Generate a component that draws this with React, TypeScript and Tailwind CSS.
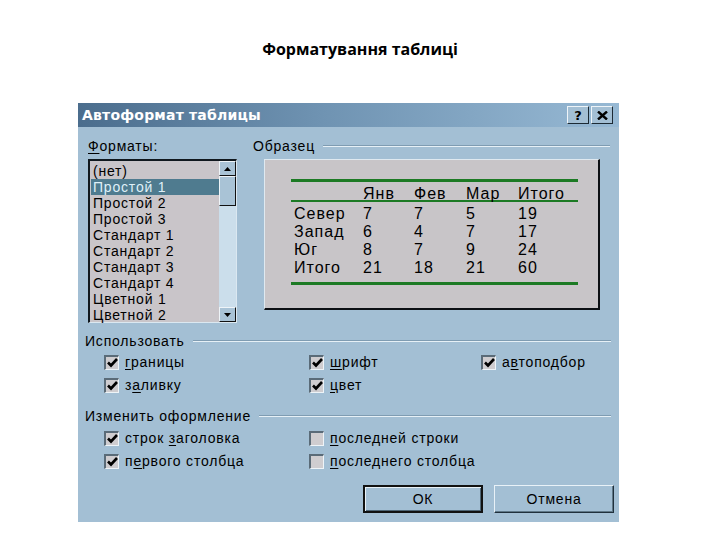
import React from "react";

const FONT = { fontFamily: '"Liberation Sans", Arial, sans-serif' };

const formats = [
  "(нет)",
  "Простой 1",
  "Простой 2",
  "Простой 3",
  "Стандарт 1",
  "Стандарт 2",
  "Стандарт 3",
  "Стандарт 4",
  "Цветной 1",
  "Цветной 2",
];

const sampleRows = [
  ["Север", "7", "7", "5", "19"],
  ["Запад", "6", "4", "7", "17"],
  ["Юг", "8", "7", "9", "24"],
  ["Итого", "21", "18", "21", "60"],
];

function Label({ text, u }: { text: string; u: number }) {
  return (
    <span>
      {text.slice(0, u)}
      <span className="underline underline-offset-2">{text[u]}</span>
      {text.slice(u + 1)}
    </span>
  );
}

function Check({ checked, text, u }: { checked: boolean; text: string; u: number }) {
  return (
    <div className="flex items-center h-[23px]">
      <div className="w-[15px] h-[15px] bg-[#cfcdd0] border-t-2 border-l-2 border-[#5a6b78] border-b border-r border-b-[#eef4f8] border-r-[#eef4f8] flex items-center justify-center">
        {checked && (
          <svg width="11" height="10" viewBox="0 0 11 10">
            <path d="M1 4.5 L4 7.5 L10 1" fill="none" stroke="#000" strokeWidth="2.6" />
          </svg>
        )}
      </div>
      <div className="ml-[6px] text-[14px] tracking-[0.8px] text-black">
        <Label text={text} u={u} />
      </div>
    </div>
  );
}

function GroupTitle({ text }: { text: string }) {
  return (
    <div className="flex items-center h-[16px] text-[14px] tracking-[0.8px] text-black">
      <span className="whitespace-nowrap">{text}</span>
      <div className="flex-1 ml-2 flex flex-col">
        <div className="h-px bg-[#7f9cb2]" />
        <div className="h-px bg-[#e6f0f6]" />
      </div>
    </div>
  );
}

function Button({ label, def }: { label: string; def?: boolean }) {
  return (
    <div
      className={`h-[28px] w-[120px] flex items-center justify-center text-[14px] tracking-[0.8px] text-black bg-[#a3bfd4] ${
        def
          ? "border-2 border-[#111] shadow-[inset_1px_1px_0_#e8f1f7,inset_-1px_-1px_0_#4f6676]"
          : "border border-[#e8f1f7] border-r-[#20303c] border-b-[#20303c] shadow-[inset_-1px_-1px_0_#5f7888]"
      }`}
    >
      {label}
    </div>
  );
}

function TitleBtn({ children }: { children: React.ReactNode }) {
  return (
    <div className="w-[22px] h-[18px] bg-[#a3bfd4] border border-[#eef4f8] border-r-[#1c2a34] border-b-[#1c2a34] flex items-center justify-center">
      {children}
    </div>
  );
}

export default function App() {
  return (
    <div className="w-[720px] h-[540px] bg-white overflow-hidden" style={FONT}>
      <div className="h-[103px] pt-[37px] text-center">
        <span
          className="text-[16px] font-bold text-black"
          style={{ fontFamily: '"Open Sans", "Liberation Sans", sans-serif' }}
        >
          Форматування таблиці
        </span>
      </div>

      <div className="ml-[78px] w-[541px]">
        {/* title bar */}
        <div className="h-[24px] flex items-center pl-[4px] pr-[6px] bg-[linear-gradient(90deg,#4b6d8d_0%,#6f93b2_45%,#97b9d4_100%)]">
          <span
            className="flex-1 text-white font-bold text-[14px] tracking-[0.2px]"
            style={{ fontFamily: '"DejaVu Sans", sans-serif' }}
          >
            Автоформат таблицы
          </span>
          <div className="flex gap-[2px]">
            <TitleBtn>
              <span className="text-[13px] font-bold text-black leading-none" style={{ fontFamily: '"DejaVu Sans", sans-serif' }}>
                ?
              </span>
            </TitleBtn>
            <TitleBtn>
              <svg width="11" height="9" viewBox="0 0 11 9">
                <path d="M1 0.5 L10 8.5 M10 0.5 L1 8.5" stroke="#000" strokeWidth="2.4" />
              </svg>
            </TitleBtn>
          </div>
        </div>

        {/* body */}
        <div className="h-[395px] bg-[#a3bfd4] pt-[11px] text-black">
          <div className="flex">
            {/* formats */}
            <div className="ml-[10px] w-[149px]">
              <div className="h-[16px] text-[14px] tracking-[0.8px] leading-[16px]">
                <Label text="Форматы:" u={0} />
              </div>
              <div className="mt-[5px] h-[164px] flex border-t-2 border-l-2 border-[#10181e] border-b border-r border-b-[#dbe8f1] border-r-[#dbe8f1] bg-[#c9c5c9]">
                <div className="flex-1 pt-[2px] pl-[1px]">
                  {formats.map((f, i) => (
                    <div
                      key={f}
                      className={`h-[16px] leading-[16px] text-[14px] tracking-[0.8px] pl-[2px] ${
                        i === 1 ? "bg-[#4f7b8f] text-[#dff0f8]" : "text-black"
                      }`}
                    >
                      {f}
                    </div>
                  ))}
                </div>
                <div className="w-[17px] bg-[#cbdeeb] flex flex-col justify-between">
                  <div>
                    <div className="h-[15px] bg-[#a9c3d6] border border-[#eef4f8] border-r-[#111] border-b-[#111] flex items-center justify-center">
                      <svg width="7" height="4" viewBox="0 0 7 4">
                        <path d="M3.5 0 L7 4 L0 4 Z" fill="#000" />
                      </svg>
                    </div>
                    <div className="h-[30px] bg-[#a9c3d6] border border-[#eef4f8] border-r-[#111] border-b-[#111]" />
                  </div>
                  <div className="h-[15px] bg-[#a9c3d6] border border-[#eef4f8] border-r-[#111] border-b-[#111] flex items-center justify-center">
                    <svg width="7" height="4" viewBox="0 0 7 4">
                      <path d="M0 0 L7 0 L3.5 4 Z" fill="#000" />
                    </svg>
                  </div>
                </div>
              </div>
            </div>

            {/* sample */}
            <div className="ml-[16px] w-[357px]">
              <GroupTitle text="Образец" />
              <div className="mt-[5px] ml-[11px] w-[336px] h-[151px] bg-[#c8c5c8] border-t border-l border-[#dfe9f0] border-b-2 border-r-2 border-b-[#0c1014] border-r-[#0c1014] pt-[19px] pl-[26px] pr-[20px]">
                <div className="h-[3px] bg-[#1c7a24]" />
                <div className="grid grid-cols-[69px_51px_52px_52px_1fr] pl-[3px] h-[18px] items-center text-[16px] tracking-[1px]">
                  <span />
                  <span>Янв</span>
                  <span>Фев</span>
                  <span>Мар</span>
                  <span>Итого</span>
                </div>
                <div className="h-[2px] bg-[#1c7a24]" />
                {sampleRows.map((r) => (
                  <div
                    key={r[0]}
                    className="grid grid-cols-[69px_51px_52px_52px_1fr] pl-[3px] h-[18px] items-center text-[16px] tracking-[1px]"
                  >
                    {r.map((c, i) => (
                      <span key={i}>{c}</span>
                    ))}
                  </div>
                ))}
                <div className="mt-[8px] h-[3px] bg-[#1c7a24]" />
              </div>
            </div>
          </div>

          {/* use */}
          <div className="mt-[10px] pl-[7px] pr-[8px]">
            <GroupTitle text="Использовать" />
          </div>
          <div className="mt-[2px] pl-[26px] grid grid-cols-[205px_172px_1fr]">
            <Check checked text="границы" u={0} />
            <Check checked text="шрифт" u={0} />
            <Check checked text="автоподбор" u={1} />
            <Check checked text="заливку" u={1} />
            <Check checked text="цвет" u={0} />
          </div>

          {/* modify */}
          <div className="mt-[11px] pl-[7px] pr-[8px]">
            <GroupTitle text="Изменить оформление" />
          </div>
          <div className="mt-[3px] pl-[26px] grid grid-cols-[205px_1fr]">
            <Check checked text="строк заголовка" u={6} />
            <Check checked={false} text="последней строки" u={0} />
            <Check checked text="первого столбца" u={1} />
            <Check checked={false} text="последнего столбца" u={0} />
          </div>

          <div className="mt-[12px] flex justify-end gap-[11px] pr-[5px]">
            <Button label="ОК" def />
            <Button label="Отмена" />
          </div>
        </div>
      </div>
    </div>
  );
}
